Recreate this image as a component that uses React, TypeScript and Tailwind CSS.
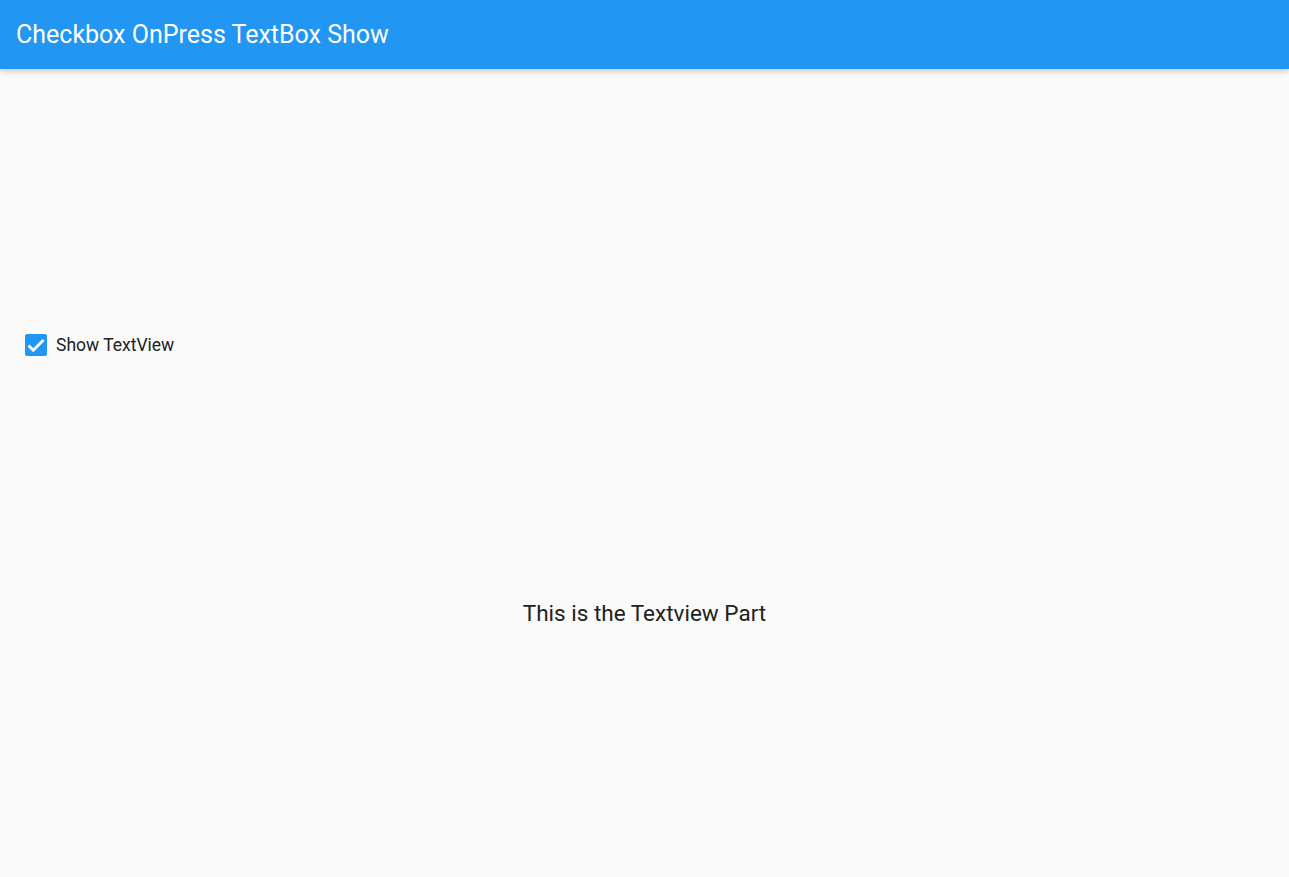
import { useState } from 'react';

function App() {
  const [checked, setChecked] = useState(true);

  return (
    <div className="h-screen w-full flex flex-col bg-[#fafafa] font-['Roboto',sans-serif] text-[#212121]">
      {/* APP BAR */}
      <header className="h-[69px] shrink-0 flex items-center px-4 bg-[#2196f3] shadow-[0_2px_6px_rgba(0,0,0,0.22)] z-10">
        <h1 className="text-[25px] text-white">Checkbox OnPress TextBox Show</h1>
      </header>

      {/* BODY */}
      <main className="flex-1 flex flex-col pt-[256px]">
        <label className="h-10 flex items-center gap-[9px] pl-[25px] cursor-pointer select-none">
          <button
            onClick={() => setChecked(!checked)}
            className={`w-[22px] h-[22px] rounded-[2px] flex items-center justify-center ${
              checked ? 'bg-[#2196f3]' : 'border-2 border-[#757575]'
            }`}
          >
            {checked && (
              <svg viewBox="0 0 22 22" className="w-[22px] h-[22px]">
                <path d="M3.5 11.5l4.8 4.8L18.5 6" fill="none" stroke="white" strokeWidth="2.8" />
              </svg>
            )}
          </button>
          <span className="text-[17.5px]">Show TextView</span>
        </label>

        {checked && (
          <p className="mt-[235px] h-7 flex items-center justify-center text-[22.5px]">
            This is the Textview Part
          </p>
        )}
      </main>
    </div>
  );
}

export default App;
